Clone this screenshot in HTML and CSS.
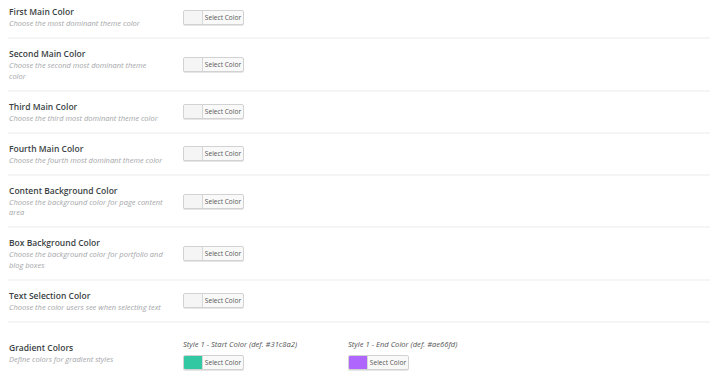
FILE: index.html
```html
<!DOCTYPE html>
<html>
<head>
<meta charset="utf-8">
<link rel="stylesheet" href="styles.css">
</head>
<body>
<div class="options">
  <div class="row first">
    <div class="info"><div class="title">First Main Color</div><div class="desc">Choose the most dominant theme color</div></div>
    <div class="control"><button class="picker"><span class="swatch"></span><span class="lbl">Select Color</span></button></div>
  </div>
  <div class="row">
    <div class="info"><div class="title">Second Main Color</div><div class="desc">Choose the second most dominant theme color</div></div>
    <div class="control"><button class="picker"><span class="swatch"></span><span class="lbl">Select Color</span></button></div>
  </div>
  <div class="row">
    <div class="info"><div class="title">Third Main Color</div><div class="desc">Choose the third most dominant theme color</div></div>
    <div class="control"><button class="picker"><span class="swatch"></span><span class="lbl">Select Color</span></button></div>
  </div>
  <div class="row">
    <div class="info"><div class="title">Fourth Main Color</div><div class="desc">Choose the fourth most dominant theme color</div></div>
    <div class="control"><button class="picker"><span class="swatch"></span><span class="lbl">Select Color</span></button></div>
  </div>
  <div class="row">
    <div class="info"><div class="title">Content Background Color</div><div class="desc">Choose the background color for page content area</div></div>
    <div class="control"><button class="picker"><span class="swatch"></span><span class="lbl">Select Color</span></button></div>
  </div>
  <div class="row">
    <div class="info"><div class="title">Box Background Color</div><div class="desc">Choose the background color for portfolio and blog boxes</div></div>
    <div class="control"><button class="picker"><span class="swatch"></span><span class="lbl">Select Color</span></button></div>
  </div>
  <div class="row">
    <div class="info"><div class="title">Text Selection Color</div><div class="desc">Choose the color users see when selecting text</div></div>
    <div class="control"><button class="picker"><span class="swatch"></span><span class="lbl">Select Color</span></button></div>
  </div>
  <div class="row gradient">
    <div class="info"><div class="title">Gradient Colors</div><div class="desc">Define colors for gradient styles</div></div>
    <div class="control pair">
      <div class="sub">
        <div class="sublabel">Style 1 - Start Color (def. #31c8a2)</div>
        <button class="picker"><span class="swatch green"></span><span class="lbl">Select Color</span></button>
      </div>
      <div class="sub">
        <div class="sublabel">Style 1 - End Color (def. #ae66fd)</div>
        <button class="picker"><span class="swatch purple"></span><span class="lbl">Select Color</span></button>
      </div>
    </div>
  </div>
</div>
</body>
</html>
```
FILE: styles.css
```css
html, body {
  margin: 0;
  padding: 0;
  background: #fff;
}
body {
  font-family: "Open Sans", "Noto Sans", sans-serif;
  color: #23282d;
}
.options {
  display: flex;
  flex-direction: column;
}
.row {
  display: flex;
  align-items: center;
  margin-left: 8px;
  padding: 9px 0 8.5px 1px;
  border-bottom: 2px solid #f5f5f5;
}
.row.first {
  padding-top: 6px;
}
.row.gradient {
  border-bottom: none;
  padding-top: 16px;
}
.info {
  width: 154px;
  flex: none;
}
.gradient .info {
  padding-bottom: 2px;
}
.title {
  font-size: 8.5px;
  font-weight: 600;
  line-height: 12px;
  color: #3a3f44;
}
.desc {
  font-size: 7.5px;
  font-style: italic;
  line-height: 10.5px;
  color: #a4a6a9;
}
.control {
  margin-left: 20px;
  display: flex;
}
.sub {
  display: flex;
  flex-direction: column;
  align-items: flex-start;
  width: 165px;
}
.sublabel {
  font-size: 7.6px;
  font-style: italic;
  line-height: 11px;
  color: #555;
  margin-bottom: 5px;
}
.picker {
  display: flex;
  align-items: stretch;
  width: 61px;
  height: 15px;
  padding: 0;
  margin: 0;
  border: 1px solid #d2d2d2;
  border-radius: 2px;
  background: #f9f9f9;
  box-shadow: 0 1px 0 #e6e6e6;
  overflow: hidden;
  font-family: inherit;
}
.swatch {
  width: 18px;
  flex: none;
  background: #f5f5f5;
  border-right: 1px solid #d8d8d8;
}
.swatch.green { background: #31c8a2; }
.swatch.purple { background: #ae66fd; }
.lbl {
  flex: 1;
  font-size: 6.6px;
  line-height: 13px;
  color: #555;
  text-align: center;
}
```
